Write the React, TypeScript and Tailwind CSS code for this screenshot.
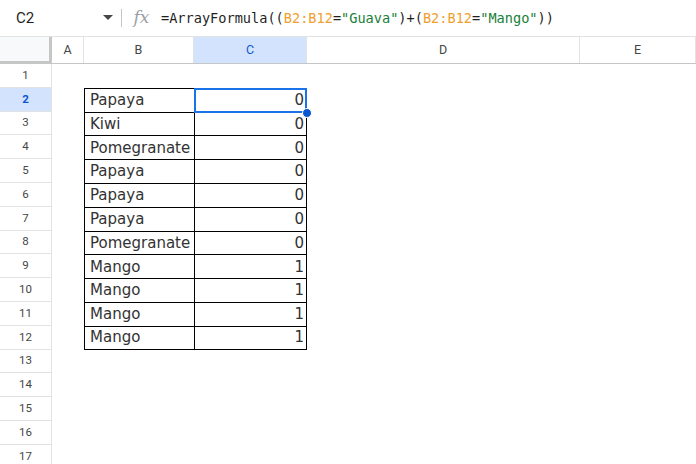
import React from 'react';

const cols = [
  { key: 'A', w: 'w-[32px]' },
  { key: 'B', w: 'w-[110px]' },
  { key: 'C', w: 'w-[113px]' },
  { key: 'D', w: 'w-[273px]' },
  { key: 'E', w: 'w-[116px]' },
];

const fruits = ['Papaya', 'Kiwi', 'Pomegranate', 'Papaya', 'Papaya', 'Papaya', 'Pomegranate', 'Mango', 'Mango', 'Mango', 'Mango'];

const rows = Array.from({ length: 17 }, (_, i) => i + 1);

const App: React.FC = () => {
  return (
    <div className="w-[696px] h-[464px] overflow-hidden bg-white font-['Roboto',sans-serif]">
      {/* Formula bar */}
      <div className="flex items-center h-[37px] border-b border-[#e1e3e1]">
        <div className="w-[96px] pl-[16px] text-[15px] text-[#1f1f1f]">C2</div>
        <div className="w-[24px] flex justify-center">
          <svg width="10" height="6" viewBox="0 0 10 6"><path d="M0 0h10L5 5z" fill="#444746" /></svg>
        </div>
        <div className="w-px h-[18px] bg-[#c4c7c5] ml-[1px]" />
        <div className="w-[39px] text-center text-[17px] italic text-[#9aa0a6] font-['DejaVu_Serif',serif]">fx</div>
        <div className="font-['DejaVu_Sans_Mono',monospace] text-[13.6px] text-[#1f1f1f] whitespace-nowrap">
          =ArrayFormula((<span className="text-[#f0a030]">B2:B12</span>=<span className="text-[#188038]">"Guava"</span>)+(<span className="text-[#f0a030]">B2:B12</span>=<span className="text-[#188038]">"Mango"</span>))
        </div>
      </div>

      {/* Column headers */}
      <div className="flex h-[27px] border-b border-[#c4c7c5]">
        <div className="w-[52px] bg-[#f8f9fa] border-r-[3px] border-b-[3px] border-[#c4c7c5] h-[27px]" />
        {cols.map((c) => (
          <div
            key={c.key}
            className={`${c.w} flex items-center justify-center text-[12.5px] border-r border-[#e1e3e1] ${c.key === 'C' ? 'bg-[#d3e3fd] text-[#0b57d0]' : 'bg-white text-[#444746]'}`}
          >
            {c.key}
          </div>
        ))}
      </div>

      {/* Rows */}
      {rows.map((r) => {
        const inTable = r >= 2 && r <= 12;
        const fruit = inTable ? fruits[r - 2] : '';
        const value = fruit === 'Mango' ? 1 : 0;
        return (
          <div key={r} className="flex h-[23.8px]">
            <div
              className={`w-[52px] flex items-center justify-center text-[11.5px] border-r border-b border-[#e1e3e1] ${r === 2 ? 'bg-[#d3e3fd] font-bold text-[#0b57d0]' : 'bg-white text-[#444746]'}`}
            >
              {r}
            </div>
            <div className="w-[32px]" />
            <div
              className={`w-[110px] flex items-center pl-[5px] text-[15px] text-[#333] font-['DejaVu_Sans',sans-serif] ${inTable ? 'border-l border-t border-black' : ''} ${r === 12 ? 'border-b' : ''}`}
            >
              {fruit}
            </div>
            <div
              className={`relative w-[113px] flex items-center justify-end pr-[2px] text-[15px] text-[#333] font-['DejaVu_Sans',sans-serif] ${inTable ? 'border-l border-t border-r border-black' : ''} ${r === 12 ? 'border-b' : ''} ${r === 2 ? 'z-10' : ''}`}
            >
              {inTable ? value : ''}
              {r === 2 && (
                <>
                  <div className="absolute -left-px -top-px -right-px -bottom-px border-2 border-[#1a73e8]" />
                  <div className="absolute -right-[6px] -bottom-[6px] w-[10px] h-[10px] rounded-full bg-[#0b57d0] border border-white" />
                </>
              )}
            </div>
            <div className="w-[273px]" />
            <div className="w-[116px]" />
          </div>
        );
      })}
    </div>
  );
};

export default App;
